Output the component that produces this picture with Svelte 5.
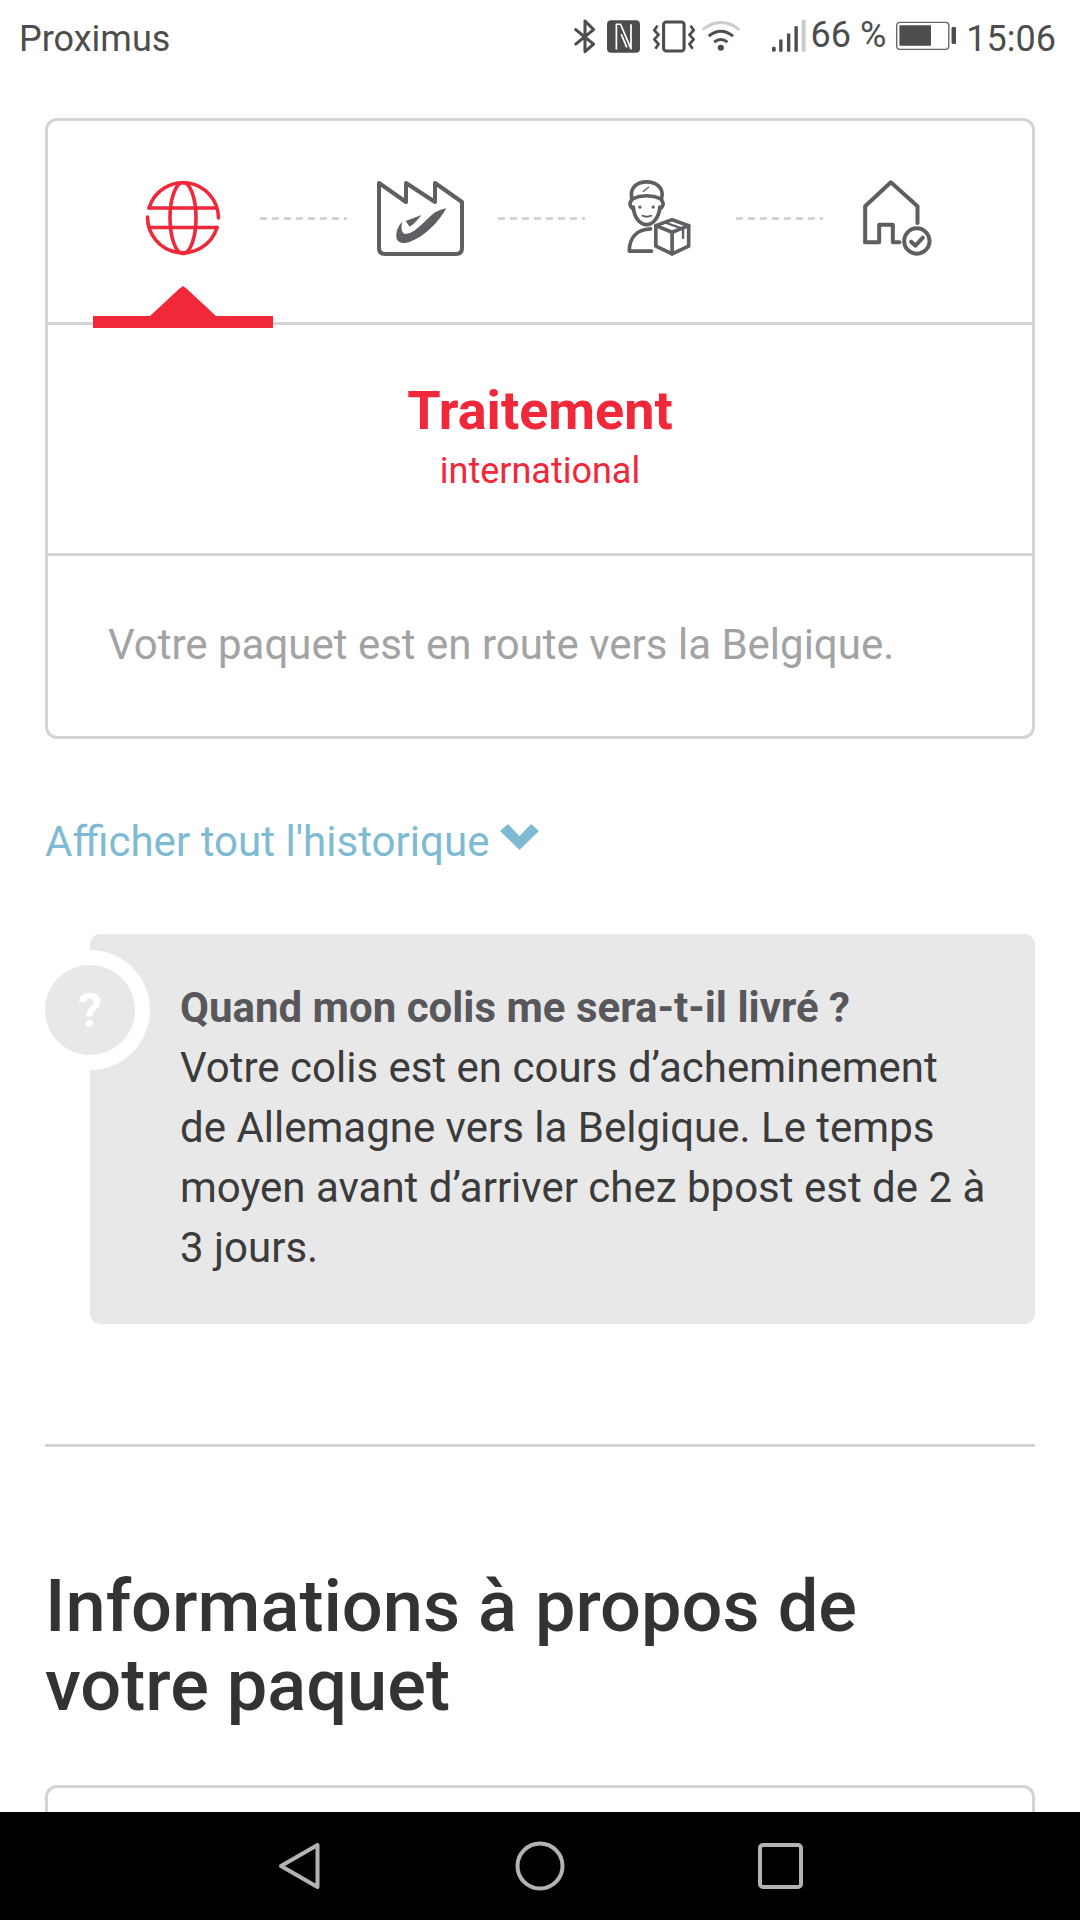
<script>
  const steps = ['globe', 'factory', 'driver', 'house'];
</script>

<div class="screen">
  <header class="status">
    <span class="carrier">Proximus</span>
    <div class="status-right">
      <svg class="s-bt" viewBox="95 50 70 115" preserveAspectRatio="none"><path d="M103 88 L155 132 L130 155 V62 L155 88 L103 132" fill="none" stroke="#4d4d4d" stroke-width="9" stroke-linejoin="round" stroke-linecap="round"/></svg>
      <svg class="s-nfc" viewBox="195 50 95 115" preserveAspectRatio="none">
        <rect x="195" y="60" width="95" height="98" rx="12" fill="#4d4d4d"/>
        <path d="M222 148 V72 H234 L264 146 V72 M236 102 L252 142" stroke="#fff" stroke-width="5" fill="none" stroke-linejoin="round"/>
      </svg>
      <svg class="s-vib" viewBox="325 50 123 115" preserveAspectRatio="none">
        <rect x="356" y="65" width="60" height="88" rx="8" fill="none" stroke="#4d4d4d" stroke-width="9"/>
        <path d="M338 76 L329 90 L341 104 L329 118 L341 132 L332 146 M435 76 L444 90 L432 104 L444 118 L432 132 L441 146" fill="none" stroke="#4d4d4d" stroke-width="8"/>
      </svg>
      <svg class="s-wifi" viewBox="475 50 115 115" preserveAspectRatio="none">
        <path d="M480 88 Q532 45 585 88" fill="none" stroke="#ccc" stroke-width="9"/>
        <path d="M497 108 Q532 78 567 108 M513 126 Q532 110 551 126" fill="none" stroke="#4d4d4d" stroke-width="9"/>
        <circle cx="532" cy="143" r="9" fill="#4d4d4d"/>
      </svg>
      <svg class="s-sig" viewBox="670 50 100 115" preserveAspectRatio="none">
        <rect x="670" y="140" width="11" height="15" rx="4" fill="#4d4d4d"/>
        <rect x="691" y="118" width="10" height="37" fill="#4d4d4d"/>
        <rect x="714" y="100" width="10" height="55" fill="#4d4d4d"/>
        <rect x="736" y="78" width="10" height="77" fill="#4d4d4d"/>
        <rect x="757" y="58" width="12" height="97" fill="#ccc"/>
      </svg>
      <span class="pct">66 %</span>
      <svg class="s-bat" viewBox="1035 50 175 115" preserveAspectRatio="none">
        <rect x="1037" y="66" width="152" height="82" rx="10" fill="none" stroke="#666" stroke-width="4"/>
        <rect x="1045" y="75" width="92" height="62" fill="#4d4d4d"/>
        <rect x="1197" y="80" width="13" height="52" rx="4" fill="#4d4d4d"/>
      </svg>
      <span class="clock">15:06</span>
    </div>
  </header>

  <main class="content">
    <section class="card">
      <div class="tracker">
        {#each steps as s, i}
          <div class="step" class:active={i === 0}>
            {#if s === 'globe'}
              <svg class="ic-globe" viewBox="144 178 78 80">
                <g fill="none" stroke="#f1273a" stroke-width="3.6" stroke-linecap="round">
                  <path d="M149 208 A35.5 35.5 0 0 1 218.5 218"/>
                  <path d="M217 227.5 A35.5 35.5 0 0 1 147.5 217"/>
                  <path d="M149 208 H216 M150 227.5 H217"/>
                  <ellipse cx="183" cy="218" rx="13" ry="35.5"/>
                </g>
              </svg>
            {:else if s === 'factory'}
              <svg class="ic-factory" viewBox="0 0 88 76">
                <path d="M2 2 L29 21 V2 L58 21 V2 L85 21 V67 Q85 73 79 73 H8 Q2 73 2 67 Z" fill="none" stroke="#5e5e63" stroke-width="4" stroke-linejoin="round"/>
                <g transform="translate(-338 -71) scale(.3333)">
                  <path d="M1222 295 C1200 335 1160 378 1110 397 C1090 402 1072 398 1072 378 C1072 360 1080 345 1090 335 C1086 350 1086 368 1098 372 C1125 372 1150 340 1178 315 C1190 305 1205 298 1222 295 Z" fill="#5e5e63"/>
                  <path d="M1148 315 L1100 333 L1112 350 C1125 342 1135 330 1148 315 Z" fill="#5e5e63"/>
                </g>
              </svg>
            {:else if s === 'driver'}
              <svg class="ic-driver" viewBox="255 205 205 240">
                <g fill="none" stroke="#5e5e63" stroke-width="11" stroke-linecap="round" stroke-linejoin="round">
                  <path d="M275 262 C270 235 290 216 320 216 C350 216 372 235 366 262"/>
                  <path d="M275 268 Q320 248 366 268"/>
                  <path d="M276 270 Q262 285 280 298 M364 270 Q378 285 360 298"/>
                  <path d="M280 292 C282 322 300 345 320 345 C340 345 358 322 360 292"/>
                  <path d="M308 318 Q320 324 334 318" stroke-width="6"/>
                  <path d="M335 425 H268 C268 385 290 360 332 358"/>
                  <path d="M397 330 L447 348 V410 L397 433 L348 410 V348 Z"/>
                  <path d="M348 348 L397 368 L447 348 M397 368 V433"/>
                  <path d="M380 340 L430 358 V385" stroke-width="7"/>
                  <path d="M310 245 L326 232" stroke-width="4"/>
                </g>
                <circle cx="300" cy="292" r="5" fill="#5e5e63"/>
                <circle cx="340" cy="292" r="5" fill="#5e5e63"/>
              </svg>
            {:else}
              <svg class="ic-house" viewBox="963 205 215 240">
                <g fill="none" stroke="#5e5e63" stroke-width="12" stroke-linecap="round" stroke-linejoin="round">
                  <path d="M975 398 V290 L1052 218 L1132 290 V340"/>
                  <path d="M975 398 H1017 V345 H1058 V398 H1078"/>
                  <circle cx="1130" cy="394" r="38"/>
                  <path d="M1113 396 L1126 408 L1148 384"/>
                </g>
              </svg>
            {/if}
            {#if i === 0}
              <span class="marker"></span>
            {/if}
          </div>
          {#if i < steps.length - 1}
            <span class="dash"></span>
          {/if}
        {/each}
      </div>
      <div class="headline">
        <h2>Traitement</h2>
        <p>international</p>
      </div>
      <p class="desc">Votre paquet est en route vers la Belgique.</p>
    </section>

    <a class="history" href="#top">
      <span>Afficher tout l'historique</span>
      <svg viewBox="0 0 39 26"><path d="M0 7 L8 0 L19.5 12 L31 0 L39 7 L19.5 26 Z" fill="#7fbad3"/></svg>
    </a>

    <aside class="faq">
      <div class="badge"><span>?</span></div>
      <p><strong>Quand mon colis me sera-t-il livré ?</strong><br />Votre colis est en cours d’acheminement de Allemagne vers la Belgique. Le temps moyen avant d’arriver chez bpost est de 2 à 3 jours.</p>
    </aside>

    <hr />

    <h1>Informations à propos de votre paquet</h1>

    <div class="card next"></div>
  </main>

  <nav class="navbar">
    <svg class="n-back" viewBox="0 0 43 48"><path d="M39.5 3 V45 L3 24 Z" fill="none" stroke="#b3b3b3" stroke-width="4" stroke-linejoin="round"/></svg>
    <svg class="n-home" viewBox="0 0 50 50"><circle cx="25" cy="25" r="22.5" fill="none" stroke="#b3b3b3" stroke-width="4"/></svg>
    <svg class="n-recent" viewBox="0 0 45 46"><rect x="2" y="2" width="41" height="42" rx="3" fill="none" stroke="#b3b3b3" stroke-width="4"/></svg>
  </nav>
</div>

<style>
  :global(body) { margin: 0; background: #fff; }
  .screen {
    width: 1080px; height: 1920px; display: flex; flex-direction: column;
    overflow: hidden; font-family: Roboto, sans-serif; background: #fff;
  }
  .status {
    height: 71px; flex: none; display: flex; align-items: center; justify-content: space-between;
    padding: 0 24px 0 19px; color: #4d4d4d; font-size: 36px;
  }
  .carrier, .clock { padding-top: 6px; }
  .status-right { display: flex; align-items: center; }
  .status-right svg { height: 38px; display: block; }
  .s-bt { width: 24px; margin-right: 10px; }
  .s-nfc { width: 33px; margin-right: 13px; }
  .s-vib { width: 42px; margin-right: 6px; }
  .s-wifi { width: 40px; margin-right: 31px; }
  .s-sig { width: 34px; margin-right: 5px; }
  .s-bat { width: 60px; margin: 0 10px 0 10px; }
  .pct { padding-bottom: 2px; }

  .content { flex: 1; min-height: 0; padding: 47px 45px 0 45px; overflow: hidden; }
  .card { border: 3px solid #d4d4d4; border-radius: 12px; background: #fff; }
  .tracker {
    height: 141px; display: flex; align-items: flex-start; padding: 60px 0 0 59px;
    border-bottom: 3px solid #d4d4d4;
  }
  .step { width: 151px; flex: none; display: flex; justify-content: center; position: relative; height: 76px; }
  .step svg { display: block; }
  .ic-globe { width: 78px; height: 80px; margin-top: -3px; }
  .ic-factory { width: 88px; height: 76px; }
  .ic-driver { width: 68px; height: 80px; margin-top: -3px; }
  .ic-house { width: 72px; height: 80px; margin-top: -3px; }
  .dash {
    width: 87px; flex: none; height: 3px; margin: 36px -2px 0 2px;
    background: repeating-linear-gradient(90deg, #d4d4d4 0 7px, transparent 7px 12px);
  }
  .marker {
    position: absolute; left: -14px; width: 180px; height: 12px; top: 135px; background: #f1273a;
  }
  .marker::before {
    content: ''; position: absolute; left: 57px; top: -30px; width: 66px; height: 30px;
    background: #f1273a; clip-path: polygon(0 100%, 29px 3px, 33px 0, 37px 3px, 100% 100%);
  }
  .headline { height: 231px; border-bottom: 3px solid #d4d4d4; text-align: center; color: #f1273a; box-sizing: border-box; padding-top: 56px; }
  .headline h2 { margin: 0; font-size: 54px; line-height: 60px; font-weight: 700; }
  .headline p { margin: 9px 0 0; font-size: 36px; line-height: 42px; }
  .desc { margin: 0; padding: 66px 0 0 60px; height: 114px; font-size: 42px; line-height: 46px; color: #a3a3a3; }

  .history { display: flex; align-items: flex-start; margin-top: 80px; color: #7fbad3; font-size: 42.1px; line-height: 46px; text-decoration: none; }
  .history svg { width: 39px; height: 26px; margin: 5px 0 0 11px; }

  .faq {
    position: relative; margin: 69px 0 0 45px; background: #e8e8e8; border-radius: 10px;
    padding: 44px 46px 40px 90px; height: 390px; box-sizing: border-box;
  }
  .faq p { margin: 0; font-size: 42px; line-height: 60px; color: #3b3b3b; }
  .faq strong { color: #58585c; font-weight: 700; }
  .badge {
    position: absolute; left: -60px; top: 16px; width: 120px; height: 120px; border-radius: 50%; background: #fff;
    display: flex; align-items: center; justify-content: center;
  }
  .badge span {
    width: 90px; height: 90px; border-radius: 50%; background: #e8e8e8; color: #fff; font-weight: 700;
    font-size: 48px; display: flex; align-items: center; justify-content: center;
  }
  hr { border: 0; height: 3px; background: #d4d4d4; margin: 120px 0 0; }
  h1 { margin: 120px 0 0; font-size: 72.2px; line-height: 79px; font-weight: 500; color: #333; }
  .next { margin-top: 60px; height: 400px; }

  .navbar { height: 108px; flex: none; background: #000; position: relative; display: flex; align-items: center; }
  .navbar svg { display: block; flex: none; }
  .n-back { width: 43px; height: 48px; margin: 0 0 0 278px; }
  .n-home { width: 50px; height: 50px; margin-left: 194px; }
  .n-recent { width: 45px; height: 46px; margin-left: 193px; }
</style>
